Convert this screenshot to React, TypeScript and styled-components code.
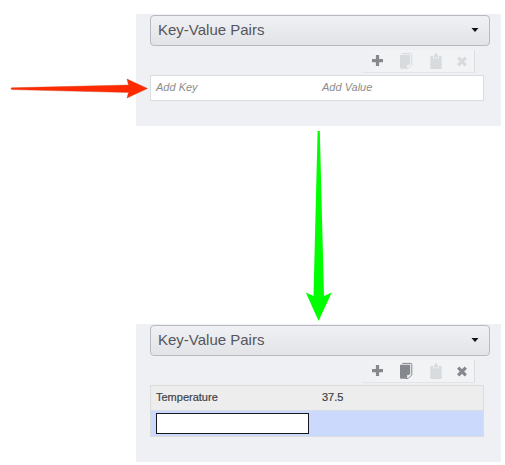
import React from 'react';
import styled, { createGlobalStyle } from 'styled-components';

const GlobalStyle = createGlobalStyle`
  body {
    margin: 0;
    background: #fff;
    font-family: 'Liberation Sans', Arial, sans-serif;
  }
`;

const Page = styled.main`
  position: relative;
  box-sizing: border-box;
  width: 505px;
  height: 465px;
  padding: 14px 4px 0 136px;
  overflow: hidden;
`;

const Panel = styled.section<{ $height: number }>`
  box-sizing: border-box;
  height: ${(p) => p.$height}px;
  padding: 1px 11px 0 14px;
  background: #eff0f4;
`;

const Header = styled.header`
  box-sizing: border-box;
  display: flex;
  align-items: center;
  justify-content: space-between;
  height: 31px;
  padding: 0 10px 2px 7px;
  border: 1px solid #b9babf;
  border-radius: 4px;
  background: linear-gradient(#f0f1f4, #e2e3e7);
`;

const Title = styled.h2`
  margin: 0;
  font-size: 15px;
  line-height: 18px;
  font-weight: 400;
  color: #55565b;
  white-space: nowrap;
`;

const Caret = styled.svg`
  display: block;
  width: 8px;
  height: 4px;
`;

const Toolbar = styled.div`
  box-sizing: border-box;
  display: flex;
  width: 112px;
  height: 23px;
  margin: 4px 0 0 213px;
  padding: 2px 0 0 8px;
  border-right: 1px solid #dcdde0;
  border-bottom: 1px solid #e3e4e7;
  background: linear-gradient(90deg, #eff0f4, #f1f3f5 20px);
`;

const IconButton = styled.button<{ $width: number; $gap?: number }>`
  display: block;
  width: ${(p) => p.$width}px;
  height: 18px;
  margin: 0 ${(p) => p.$gap ?? 0}px 0 0;
  padding: 0;
  border: 0;
  background: none;
  color: #85898d;
  &:disabled {
    color: #d8dbde;
  }
  svg {
    display: block;
  }
`;

const Table = styled.div`
  box-sizing: border-box;
  width: 334px;
  margin-top: 2px;
  border: 1px solid #dbdcde;
`;

const Row = styled.div<{ $tone: string; $height: number }>`
  box-sizing: border-box;
  display: grid;
  grid-template-columns: 166px 1fr;
  align-items: center;
  height: ${(p) => p.$height}px;
  padding: 0 5px;
  background: ${(p) => p.$tone};
  & + & {
    border-top: 1px solid #d8dce4;
  }
`;

const Cell = styled.span<{ $hint?: boolean }>`
  padding-bottom: 1px;
  font-size: 11px;
  line-height: 13px;
  font-style: ${(p) => (p.$hint ? 'italic' : 'normal')};
  color: ${(p) => (p.$hint ? '#8c8c8c' : '#3e4148')};
  -webkit-text-stroke: ${(p) => (p.$hint ? '0' : '0.2px #3e4148')};
`;

const KeyInput = styled.input`
  box-sizing: border-box;
  width: 153px;
  height: 21px;
  margin: 0;
  padding: 0 3px;
  border: 1px solid #15171c;
  border-radius: 0;
  background: #fff;
  font: 11px 'Liberation Sans', Arial, sans-serif;
  outline: none;
`;

const Gap = styled.div`
  height: 198px;
  padding: 5px 0 0 169px;
  box-sizing: border-box;
  svg {
    display: block;
  }
`;

const PointerArrow = styled.svg`
  position: absolute;
  left: 10px;
  top: 78px;
`;

const PlusIcon = () => (
  <svg width="13" height="18" viewBox="0 0 13 18">
    <path d="M4.9 3h3.2v4h3.9v3.2H8.1v3.8H4.9v-3.8H1V7h3.9z" fill="currentColor" />
  </svg>
);

const CopyIcon = () => (
  <svg width="14" height="18" viewBox="0 0 14 18">
    <path d="M1.2 2.8h10v8.8L7 16.8H2q-1 0-1-1V3.5z" fill="currentColor" />
    <path d="M8.2 15.5v-2.5h2.2z" fill="#f3f4f6" />
    <path
      d="M3.2 1.4h8.6q1 0 1 1V12.8L9.2 16.5H7"
      fill="none"
      stroke="currentColor"
      strokeWidth="1"
    />
  </svg>
);

const PasteIcon = () => (
  <svg width="12" height="18" viewBox="0 0 12 18">
    <path
      d="M1 4h2v2.2h6V4h2q.7 0 .7.7v11.6q0 .7-.7.7H1q-.7 0-.7-.7V4.7Q.3 4 1 4z"
      fill="currentColor"
    />
    <path d="M3.8 3.2h1V2q0-.8 1.2-.8T7.2 2v1.2h1v2.2H3.8z" fill="currentColor" />
  </svg>
);

const DeleteIcon = () => (
  <svg width="12" height="18" viewBox="0 0 12 18">
    <path d="M2.2 5.7l7.6 7.6M9.8 5.7l-7.6 7.6" stroke="currentColor" strokeWidth="3.2" />
  </svg>
);

function PanelTop({ canCopy, canDelete }: { canCopy: boolean; canDelete: boolean }) {
  return (
    <>
      <Header>
        <Title>Key-Value Pairs</Title>
        <Caret viewBox="0 0 8 4">
          <path d="M.5 0h7L4 4z" fill="#111" />
        </Caret>
      </Header>
      <Toolbar>
        <IconButton $width={13} $gap={15} aria-label="Add">
          <PlusIcon />
        </IconButton>
        <IconButton $width={14} $gap={17} disabled={!canCopy} aria-label="Copy">
          <CopyIcon />
        </IconButton>
        <IconButton $width={12} $gap={14} disabled aria-label="Paste">
          <PasteIcon />
        </IconButton>
        <IconButton $width={12} disabled={!canDelete} aria-label="Delete">
          <DeleteIcon />
        </IconButton>
      </Toolbar>
    </>
  );
}

export default function App() {
  return (
    <>
      <GlobalStyle />
      <Page>
        <Panel $height={112}>
          <PanelTop canCopy={false} canDelete={false} />
          <Table>
            <Row $tone="#fff" $height={24}>
              <Cell $hint>Add Key</Cell>
              <Cell $hint>Add Value</Cell>
            </Row>
          </Table>
        </Panel>
        <Gap>
          <svg width="28" height="191" viewBox="0 0 28 191">
            <path d="M12.6 0h2.2L19 165l7.7-3.5L13.6 190 .8 161.5 8.5 165z" fill="#00ff00" />
          </svg>
        </Gap>
        <Panel $height={138}>
          <PanelTop canCopy canDelete />
          <Table>
            <Row $tone="#ededed" $height={24}>
              <Cell>Temperature</Cell>
              <Cell>37.5</Cell>
            </Row>
            <Row $tone="#cad9fc" $height={26}>
              <KeyInput aria-label="Key" />
            </Row>
          </Table>
        </Panel>
        <PointerArrow width="139" height="22" viewBox="0 0 139 22">
          <path
            d="M1.5 9.8L118.500 7l-1.500-6L137.500 10.500 117 20l1.500-5.500L1.500 11.600Q.7 10.700 1.500 9.800z"
            fill="#ff2a00"
            stroke="#c9401f"
            strokeWidth="0.4"
          />
        </PointerArrow>
      </Page>
    </>
  );
}
